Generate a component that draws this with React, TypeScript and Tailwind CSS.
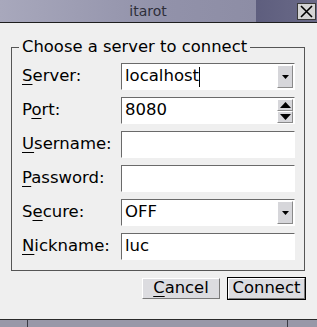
const Label: React.FC<{ pre: string; u: string; post: string }> = ({ pre, u, post }) => (
  <span className="w-[99px] shrink-0">
    {pre}
    <span className="underline underline-offset-[3px] decoration-1">{u}</span>
    {post}
  </span>
)

const Field: React.FC<{ children?: React.ReactNode }> = ({ children }) => (
  <div className="flex-1 h-[27px] bg-white border-t border-l border-[#6a6a6a] border-b-white border-r-white border-b border-r flex items-center pl-[3px] relative">
    {children}
  </div>
)

const ComboArrow = () => (
  <div className="absolute right-[1px] top-[1px] w-[16px] h-[23px] bg-[#d6d6da] border-t border-l border-white border-b border-r border-b-[#8a8a8a] border-r-[#8a8a8a] flex items-center justify-center">
    <svg width="7" height="4" viewBox="0 0 7 4"><path d="M0 0h7L3.5 4z" fill="#000" /></svg>
  </div>
)

const App: React.FC = () => {
  return (
    <div className="w-[317px] h-[327px] flex flex-col bg-[#efefef] text-black overflow-hidden" style={{ fontFamily: '"DejaVu Sans", sans-serif' }}>
      {/* title bar */}
      <div className="h-[22px] flex items-center shrink-0 bg-gradient-to-r from-[#a8a8bc] via-[#9292aa] to-[#8a8aa2]">
        <div className="flex-1 text-center text-[14px] text-[#2e2e3a] pl-[40px]">itarot</div>
        <div className="w-[61px] h-full bg-gradient-to-r from-[#5e5e7e] to-[#6a6a88] flex items-center justify-end pr-[1px]">
          <div className="w-[19px] h-[17px] bg-[#d4d4d4] border border-[#3a3a3a] flex items-center justify-center">
            <svg width="13" height="13" viewBox="0 0 13 13"><path d="M1 1L12 12M12 1L1 12" stroke="#000" strokeWidth="1.6" /></svg>
          </div>
        </div>
      </div>
      <div className="h-px bg-[#1e1e1e] shrink-0" />

      <div className="flex-1 flex flex-col">
        <fieldset className="ml-[11px] mr-[12px] mt-[14px] border border-[#555] pl-[10px] pr-[9px] pt-[6px] pb-[10px] flex flex-col gap-[7px] text-[16.5px]">
          <legend className="-ml-[3px] px-[3px] text-[16.4px] leading-[20px]">Choose a server to connect</legend>
          <div className="flex items-center">
            <Label pre="" u="S" post="erver:" />
            <Field>
              <span>localhost</span>
              <span className="w-px h-[20px] bg-black" />
              <ComboArrow />
            </Field>
          </div>
          <div className="flex items-center">
            <Label pre="P" u="o" post="rt:" />
            <Field>
              <span>8080</span>
              <div className="absolute right-[1px] top-[1px] w-[16px] h-[24px] flex flex-col">
                <div className="h-[12px] bg-[#d6d6da] border-t border-l border-white border-b border-r border-b-[#8a8a8a] border-r-[#8a8a8a] flex items-center justify-center">
                  <svg width="11" height="6" viewBox="0 0 11 6"><path d="M0 6h11L5.5 0z" fill="#000" /></svg>
                </div>
                <div className="h-[12px] bg-[#d6d6da] border-t border-l border-white border-b border-r border-b-[#8a8a8a] border-r-[#8a8a8a] flex items-center justify-center">
                  <svg width="11" height="6" viewBox="0 0 11 6"><path d="M0 0h11L5.5 6z" fill="#000" /></svg>
                </div>
              </div>
            </Field>
          </div>
          <div className="flex items-center">
            <Label pre="" u="U" post="sername:" />
            <Field />
          </div>
          <div className="flex items-center">
            <Label pre="" u="P" post="assword:" />
            <Field />
          </div>
          <div className="flex items-center">
            <Label pre="S" u="e" post="cure:" />
            <Field>
              <span>OFF</span>
              <ComboArrow />
            </Field>
          </div>
          <div className="flex items-center">
            <Label pre="" u="N" post="ickname:" />
            <Field>
              <span>luc</span>
            </Field>
          </div>
        </fieldset>

        <div className="flex justify-end items-center gap-[7px] mt-[6px] mr-[11px] text-[16.4px]">
          <button type="button" className="w-[78px] h-[21px] bg-[#dcdce0] border border-t-white border-l-white border-b-[#7a7a7a] border-r-[#7a7a7a] flex items-center justify-center leading-none">
            <span><span className="underline underline-offset-[3px] decoration-1">C</span>ancel</span>
          </button>
          <div className="border border-black">
            <button type="button" className="w-[77px] h-[21px] bg-[#dcdce0] border border-t-white border-l-white border-b-[#7a7a7a] border-r-[#7a7a7a] flex items-center justify-center leading-none">
              Connect
            </button>
          </div>
        </div>
      </div>

      {/* bottom panel */}
      <div className="h-px bg-[#2a2a2a] shrink-0" />
      <div className="h-[7px] shrink-0 bg-[#9898a8] flex">
        <div className="w-[28px] border-r border-[#3a3a44]" />
        <div className="w-[260px] border-r border-[#3a3a44]" />
        <div className="flex-1" />
      </div>
    </div>
  )
}

export default App
